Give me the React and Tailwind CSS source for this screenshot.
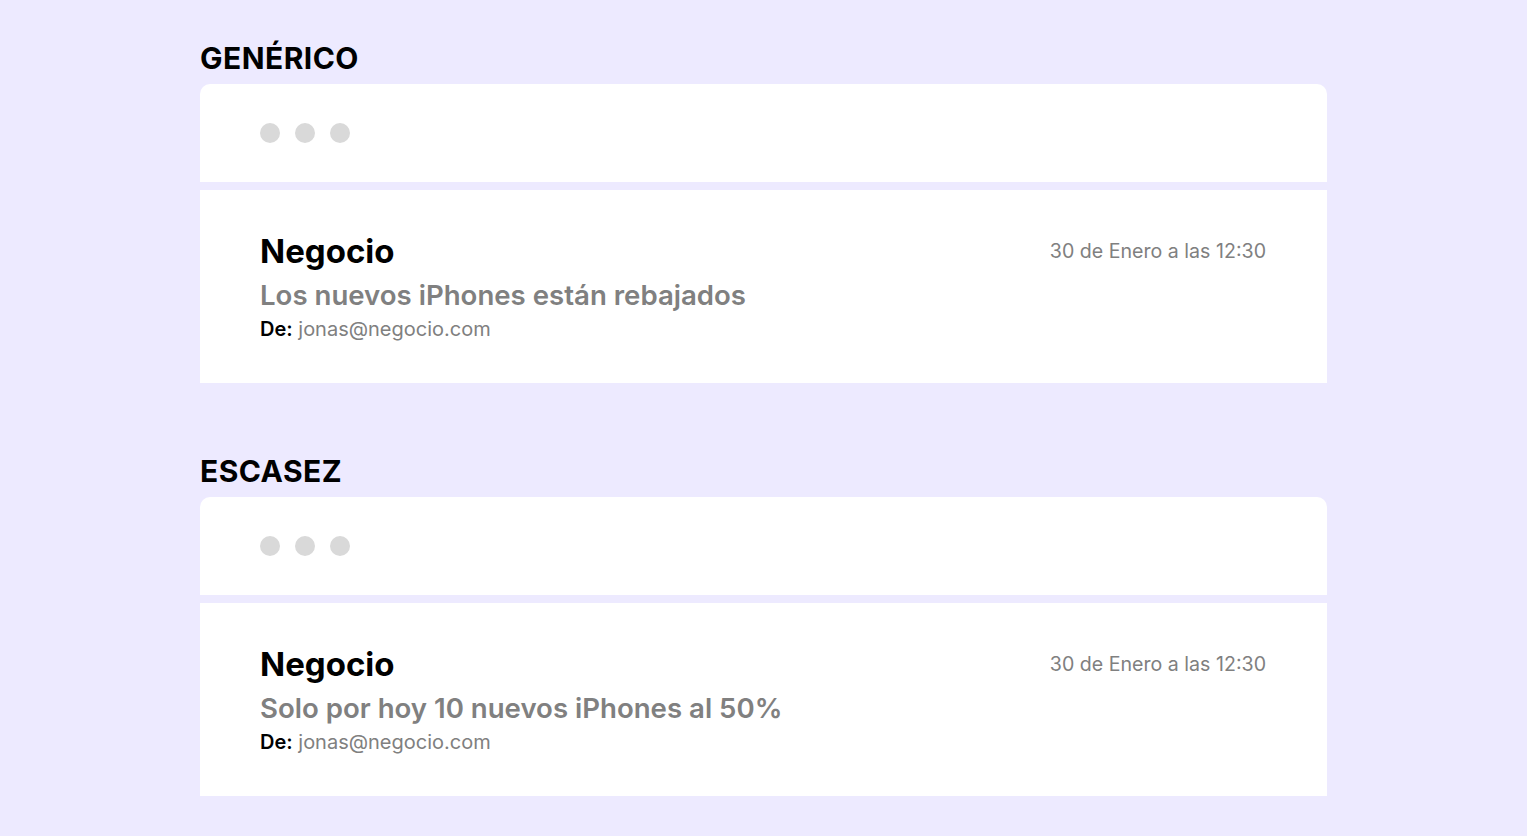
import React from 'react'

const SECTIONS = [
  { title: 'GENÉRICO', subject: 'Los nuevos iPhones están rebajados' },
  { title: 'ESCASEZ', subject: 'Solo por hoy 10 nuevos iPhones al 50%' },
]

function Dots() {
  return (
    <div className="flex gap-[15px]">
      <span className="w-5 h-5 rounded-full bg-[#d9d9d9]" />
      <span className="w-5 h-5 rounded-full bg-[#d9d9d9]" />
      <span className="w-5 h-5 rounded-full bg-[#d9d9d9]" />
    </div>
  )
}

function MailPreview({ title, subject }) {
  return (
    <section>
      <h2 className="text-[30px] leading-[32px] font-bold text-black tracking-[0.015em]">{title}</h2>
      <div className="mt-[10px] flex flex-col gap-2">
        <div className="h-[98px] bg-white rounded-t-[10px] px-[60px] flex items-center">
          <Dots />
        </div>
        <div className="bg-white pl-[60px] pr-[61px] pt-[41px] pb-[42px] flex justify-between items-start">
          <div className="flex flex-col">
            <p className="text-[33px] leading-[40px] font-bold text-black">Negocio</p>
            <p className="mt-2 text-[27.6px] leading-[32px] font-semibold text-[#808080]">{subject}</p>
            <p className="mt-[6px] text-[20px] leading-[24px] text-[#808080]">
              <span className="font-semibold text-black">De:</span> jonas@negocio.com
            </p>
          </div>
          <p className="mt-[8px] text-[19.6px] leading-[24px] text-[#808080]">30 de Enero a las 12:30</p>
        </div>
      </div>
    </section>
  )
}

export default function App() {
  return (
    <div className="min-h-screen bg-[#edeaff] font-['Inter',sans-serif] pt-[42px] pb-10">
      <div className="w-[1127px] ml-[200px] flex flex-col gap-[72px]">
        {SECTIONS.map((s) => (
          <MailPreview key={s.title} title={s.title} subject={s.subject} />
        ))}
      </div>
    </div>
  )
}
